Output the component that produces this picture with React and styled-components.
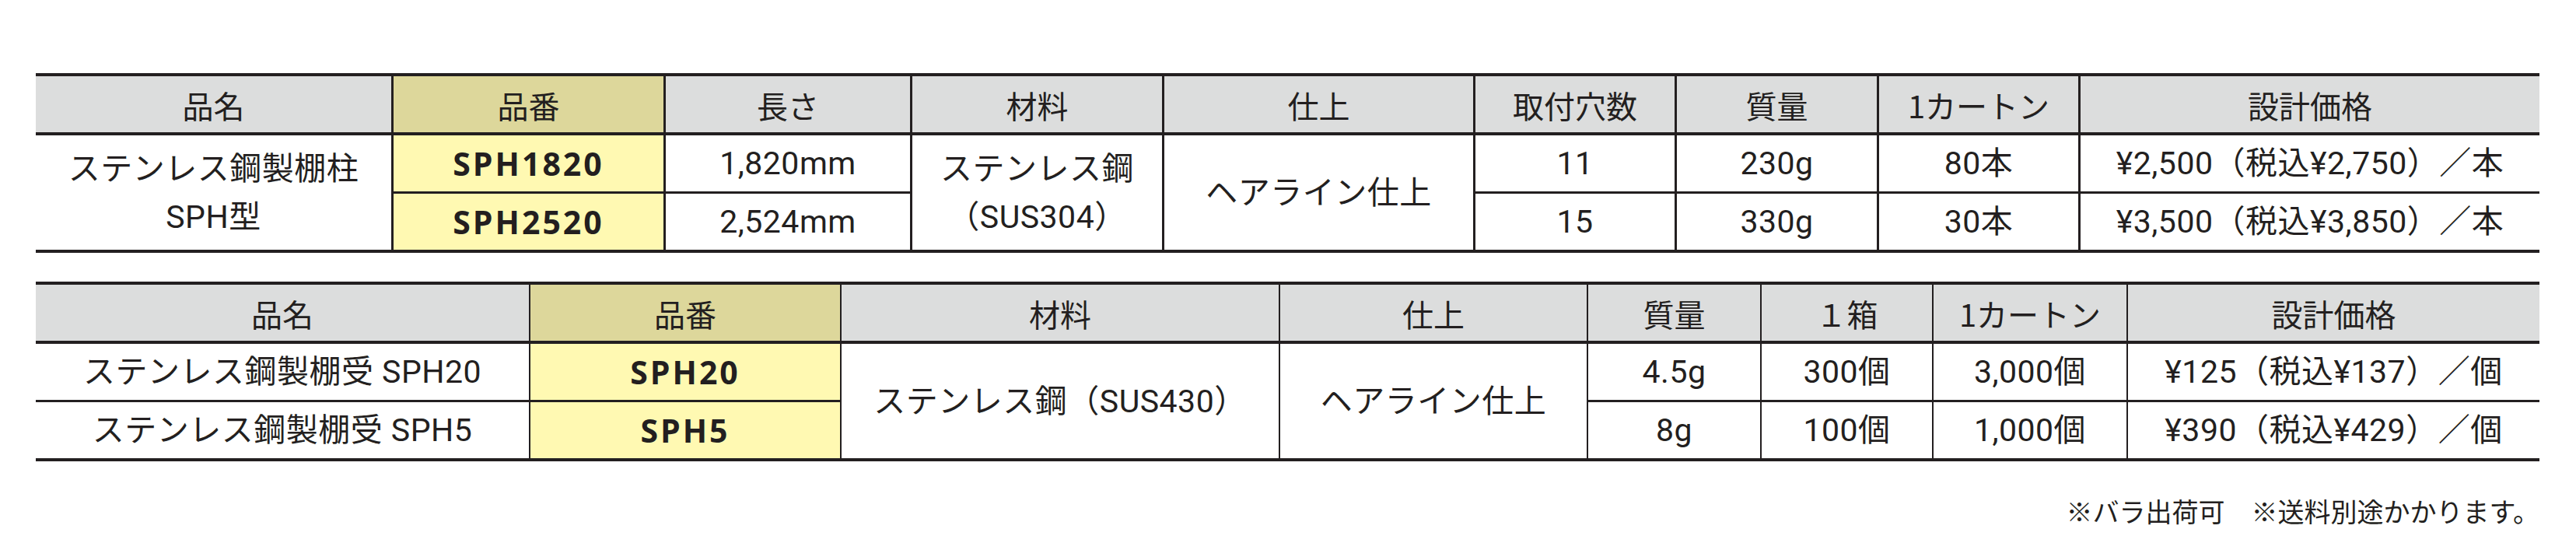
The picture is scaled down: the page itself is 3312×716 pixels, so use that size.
import React from "react";
import styled, { createGlobalStyle } from "styled-components";

const GlobalStyle = createGlobalStyle`
  html, body {
    margin: 0;
    padding: 0;
    background: #ffffff;
  }
  body {
    font-family: "Roboto", "Noto Sans CJK JP", sans-serif;
    color: #231f20;
  }
`;

const INK = "#231f20";

const Page = styled.div`
  width: 3312px;
  height: 716px;
  box-sizing: border-box;
  padding: 94px 0 0 46px;
  display: flex;
  flex-direction: column;
`;

const SpecTable = styled.div`
  width: 3219px;
  display: grid;
  grid-template-columns: ${(p) => p.$cols};
  grid-template-rows: 76px 75px 72px;
  border-top: 4px solid ${INK};
  border-bottom: 4px solid ${INK};
  margin-top: ${(p) => p.$gap || 0}px;
`;

const HeadCell = styled.div`
  box-sizing: border-box;
  display: flex;
  align-items: center;
  justify-content: center;
  background: ${(p) => (p.$accent ? "#ddd79b" : "#dcdddd")};
  border-bottom: 4px solid ${INK};
  border-right: ${(p) => (p.$last ? "none" : `${p.$vline}px solid ${INK}`)};
  font-family: "Noto Sans CJK JP", sans-serif;
  font-size: 40px;
  line-height: 1;
  padding-top: 2px;
`;

const Cell = styled.div`
  box-sizing: border-box;
  display: flex;
  flex-direction: column;
  align-items: center;
  justify-content: center;
  background: ${(p) => (p.$code ? "#fff9b2" : "#ffffff")};
  border-right: ${(p) => (p.$last ? "none" : `${p.$vline}px solid ${INK}`)};
  border-bottom: ${(p) => (p.$sep ? `3px solid ${INK}` : "none")};
  grid-row: ${(p) => (p.$span ? "span 2" : "auto")};
  font-size: 41px;
  letter-spacing: 0.5px;
  line-height: 62px;
  white-space: nowrap;
`;

const Code = styled.span`
  font-family: "Open Sans", "Noto Sans", sans-serif;
  font-weight: 700;
  font-size: 41px;
  letter-spacing: 3px;
`;

const Note = styled.p`
  width: 3219px;
  margin: 43px 0 0;
  text-align: right;
  font-family: "Noto Sans CJK JP", sans-serif;
  font-size: 34px;
  line-height: 41px;
`;

const table1 = {
  cols: "460px 350px 317px 324px 400px 259px 260px 259px 590px",
  heads: ["品名", "品番", "長さ", "材料", "仕上", "取付穴数", "質量", "1カートン", "設計価格"],
  rows: [
    [
      { text: ["ステンレス鋼製棚柱", "SPH型"], span: true },
      { text: ["SPH1820"], code: true },
      { text: ["1,820mm"] },
      { text: ["ステンレス鋼", "（SUS304）"], span: true },
      { text: ["ヘアライン仕上"], span: true },
      { text: ["11"] },
      { text: ["230g"] },
      { text: ["80本"] },
      { text: ["¥2,500（税込¥2,750）／本"] },
    ],
    [
      { text: ["SPH2520"], code: true, col: 1 },
      { text: ["2,524mm"], col: 2 },
      { text: ["15"], col: 5 },
      { text: ["330g"], col: 6 },
      { text: ["30本"], col: 7 },
      { text: ["¥3,500（税込¥3,850）／本"], col: 8 },
    ],
  ],
};

const table2 = {
  cols: "636px 400px 564px 396px 223px 221px 250px 529px",
  heads: ["品名", "品番", "材料", "仕上", "質量", "１箱", "1カートン", "設計価格"],
  rows: [
    [
      { text: ["ステンレス鋼製棚受 SPH20"] },
      { text: ["SPH20"], code: true },
      { text: ["ステンレス鋼（SUS430）"], span: true },
      { text: ["ヘアライン仕上"], span: true },
      { text: ["4.5g"] },
      { text: ["300個"] },
      { text: ["3,000個"] },
      { text: ["¥125（税込¥137）／個"] },
    ],
    [
      { text: ["ステンレス鋼製棚受 SPH5"], col: 0 },
      { text: ["SPH5"], code: true, col: 1 },
      { text: ["8g"], col: 4 },
      { text: ["100個"], col: 5 },
      { text: ["1,000個"], col: 6 },
      { text: ["¥390（税込¥429）／個"], col: 7 },
    ],
  ],
};

function Table({ data, vline, gap }) {
  const n = data.heads.length;
  return (
    <SpecTable $cols={data.cols} $gap={gap}>
      {data.heads.map((h, i) => (
        <HeadCell key={h} $accent={i === 1} $last={i === n - 1} $vline={vline}>
          {h}
        </HeadCell>
      ))}
      {data.rows[0].map((c, i) => (
        <Cell
          key={`a${i}`}
          $span={c.span}
          $code={c.code}
          $sep={!c.span}
          $last={i === data.rows[0].length - 1}
          $vline={vline}
        >
          {c.text.map((t) => (c.code ? <Code key={t}>{t}</Code> : <span key={t}>{t}</span>))}
        </Cell>
      ))}
      {data.rows[1].map((c, i) => (
        <Cell
          key={`b${i}`}
          $code={c.code}
          $last={c.col === n - 1}
          $vline={vline}
        >
          {c.text.map((t) => (c.code ? <Code key={t}>{t}</Code> : <span key={t}>{t}</span>))}
        </Cell>
      ))}
    </SpecTable>
  );
}

export default function App() {
  return (
    <>
      <GlobalStyle />
      <Page>
        <Table data={table1} vline={3} />
        <Table data={table2} vline={2} gap={37} />
        <Note>※バラ出荷可　※送料別途かかります。</Note>
      </Page>
    </>
  );
}
